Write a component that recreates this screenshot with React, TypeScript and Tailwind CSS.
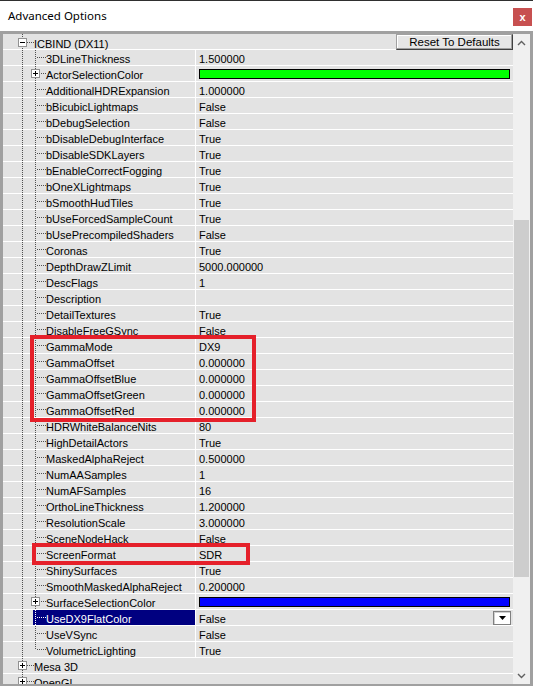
import { Fragment } from "react";

const DOT = "#505050";

interface Prop {
  name: string;
  value?: string;
  color?: string;
  expandable?: boolean;
  selected?: boolean;
  combo?: boolean;
}

const props: Prop[] = [
  { name: "3DLineThickness", value: "1.500000" },
  { name: "ActorSelectionColor", color: "#00ff00", expandable: true },
  { name: "AdditionalHDRExpansion", value: "1.000000" },
  { name: "bBicubicLightmaps", value: "False" },
  { name: "bDebugSelection", value: "False" },
  { name: "bDisableDebugInterface", value: "True" },
  { name: "bDisableSDKLayers", value: "True" },
  { name: "bEnableCorrectFogging", value: "True" },
  { name: "bOneXLightmaps", value: "True" },
  { name: "bSmoothHudTiles", value: "True" },
  { name: "bUseForcedSampleCount", value: "True" },
  { name: "bUsePrecompiledShaders", value: "False" },
  { name: "Coronas", value: "True" },
  { name: "DepthDrawZLimit", value: "5000.000000" },
  { name: "DescFlags", value: "1" },
  { name: "Description", value: "" },
  { name: "DetailTextures", value: "True" },
  { name: "DisableFreeGSync", value: "False" },
  { name: "GammaMode", value: "DX9" },
  { name: "GammaOffset", value: "0.000000" },
  { name: "GammaOffsetBlue", value: "0.000000" },
  { name: "GammaOffsetGreen", value: "0.000000" },
  { name: "GammaOffsetRed", value: "0.000000" },
  { name: "HDRWhiteBalanceNits", value: "80" },
  { name: "HighDetailActors", value: "True" },
  { name: "MaskedAlphaReject", value: "0.500000" },
  { name: "NumAASamples", value: "1" },
  { name: "NumAFSamples", value: "16" },
  { name: "OrthoLineThickness", value: "1.200000" },
  { name: "ResolutionScale", value: "3.000000" },
  { name: "SceneNodeHack", value: "False" },
  { name: "ScreenFormat", value: "SDR" },
  { name: "ShinySurfaces", value: "True" },
  { name: "SmoothMaskedAlphaReject", value: "0.200000" },
  { name: "SurfaceSelectionColor", color: "#0000ff", expandable: true },
  { name: "UseDX9FlatColor", value: "False", selected: true, combo: true },
  { name: "UseVSync", value: "False" },
  { name: "VolumetricLighting", value: "True" },
];

// 9x9 expand / collapse box of the tree control
function Expander({ x, y, open }: { x: number; y: number; open: boolean }) {
  return (
    <g shapeRendering="crispEdges">
      <rect x={x + 0.5} y={y + 0.5} width="8" height="8" fill="#ffffff" stroke="#919191" />
      <line x1={x + 2} y1={y + 4.5} x2={x + 7} y2={y + 4.5} stroke="#000000" />
      {!open && <line x1={x + 4.5} y1={y + 2} x2={x + 4.5} y2={y + 7} stroke="#000000" />}
    </g>
  );
}

function CategoryRow({ label, open, h, children }: { label: string; open: boolean; h: number; children?: React.ReactNode }) {
  const c = Math.floor(h / 2);
  return (
    <div className="flex h-[16px] items-start">
      <svg width="31" height={h} className="block shrink-0">
        <line x1="19.5" y1="0" x2="19.5" y2={h} stroke={DOT} strokeDasharray="1 1" shapeRendering="crispEdges" />
        <line x1="24" y1={c + 0.5} x2="31" y2={c + 0.5} stroke={DOT} strokeDasharray="1 1" shapeRendering="crispEdges" />
        <Expander x={15} y={c - 4} open={open} />
      </svg>
      <span className={h === 16 ? "block whitespace-nowrap pt-[4px] leading-[12px]" : "block whitespace-nowrap pt-[3px] leading-[12px]"}>
        {label}
      </span>
      {children}
    </div>
  );
}

function PropRow({ item, last }: { item: Prop; last: boolean }) {
  const line = item.selected ? "#ffffff" : DOT;
  return (
    <div className="flex h-[16px]">
      <div className="flex w-[192px] shrink-0">
        <svg width="43" height="15" className="block shrink-0">
          <line x1="19.5" y1="0" x2="19.5" y2="15" stroke={DOT} strokeDasharray="1 1" shapeRendering="crispEdges" />
          {item.selected && <rect x="30" y="0" width="13" height="15" fill="#000080" />}
          <line x1="32.5" y1="0" x2="32.5" y2={last ? 8 : 15} stroke={line} strokeDasharray="1 1" shapeRendering="crispEdges" />
          <line x1="34" y1="7.5" x2="43" y2="7.5" stroke={line} strokeDasharray="1 1" shapeRendering="crispEdges" />
          {item.expandable && <Expander x={28} y={3} open={false} />}
        </svg>
        <span
          className={
            item.selected
              ? "block flex-1 whitespace-nowrap bg-[#000080] pt-[3px] leading-[12px] text-white"
              : "block flex-1 whitespace-nowrap pt-[3px] leading-[12px]"
          }
        >
          {item.name}
        </span>
      </div>
      <div className="flex flex-1 items-center border-l border-white pl-[3px]">
        {item.color ? (
          <div className="mr-[3px] h-[10px] flex-1 border border-black" style={{ backgroundColor: item.color }} />
        ) : (
          <span className="block flex-1 self-stretch whitespace-nowrap pt-[3px] leading-[12px]">{item.value}</span>
        )}
        {item.combo && (
          <div className="mr-[2px] flex h-[14px] w-[18px] items-center justify-center border border-[#808080] bg-white shadow-[inset_1px_1px_0_#d0d0d0]">
            <svg width="7" height="4" className="block">
              <path d="M0 0H7L3.5 4Z" fill="#000000" />
            </svg>
          </div>
        )}
      </div>
    </div>
  );
}

function Chevron({ up }: { up: boolean }) {
  return (
    <svg width="9" height="6" className="block">
      <polyline
        points={up ? "1,5 4.5,1.5 8,5" : "1,1 4.5,4.5 8,1"}
        fill="none"
        stroke="#606060"
        strokeWidth="1.4"
      />
    </svg>
  );
}

export default function App() {
  return (
    <div className="flex h-[686px] w-[533px] flex-col overflow-hidden bg-white font-['Liberation_Sans',Arial,sans-serif] text-[11px] text-black">
      {/* title bar */}
      <div className="flex h-[31px] shrink-0 items-start border-t border-[#2f2f2f]">
        <span className="ml-[8px] mt-[7px] font-['Noto_Sans',sans-serif] text-[11.5px] leading-[16px]">
          Advanced Options
        </span>
        <div className="ml-auto mr-[1px] mt-[7px] flex h-[18px] w-[19px] items-center justify-center bg-[#c75050] text-[11px] font-bold leading-none text-white">
          x
        </div>
      </div>

      {/* property panel */}
      <div className="flex min-h-0 flex-1 border-b-2 border-l-[3px] border-r-[3px] border-t-[3px] border-[#a0a0a0]">
        <div className="relative w-[510px] shrink-0 divide-y divide-white overflow-hidden bg-[#e3e3e3]">
          <CategoryRow label="ICBIND (DX11)" open h={16}>
            <div className="ml-auto flex h-[16px] w-[117px] items-center justify-center border border-b-[#404040] border-l-[#a0a0a0] border-r-[#404040] border-t-[#a0a0a0] bg-[#e6e6e6] pt-[1px] text-[11.5px] leading-[13px] shadow-[inset_-1px_-1px_0_#a0a0a0,inset_1px_1px_0_#ffffff]">
              Reset To Defaults
            </div>
          </CategoryRow>
          {props.map((p, i) => (
            <Fragment key={p.name}>
              <PropRow item={p} last={i === props.length - 1} />
            </Fragment>
          ))}
          <CategoryRow label="Mesa 3D" open={false} h={15} />
          <CategoryRow label="OpenGL" open={false} h={15} />

          {/* highlight marks drawn over the list */}
          <div className="absolute left-[27px] top-[301px] h-[87px] w-[226px] border-4 border-[#e5202a]" />
          <div className="absolute left-[29px] top-[509px] h-[22px] w-[218px] border-4 border-[#e5202a]" />
        </div>

        {/* vertical scrollbar */}
        <div className="flex w-[17px] shrink-0 flex-col bg-[#f0f0f0]">
          <div className="flex h-[17px] shrink-0 items-center justify-center">
            <Chevron up />
          </div>
          <div className="mx-[1px] mt-[169px] h-[357px] shrink-0 bg-[#cdcdcd]" />
          <div className="mt-auto flex h-[17px] shrink-0 items-center justify-center">
            <Chevron up={false} />
          </div>
        </div>
      </div>
    </div>
  );
}
